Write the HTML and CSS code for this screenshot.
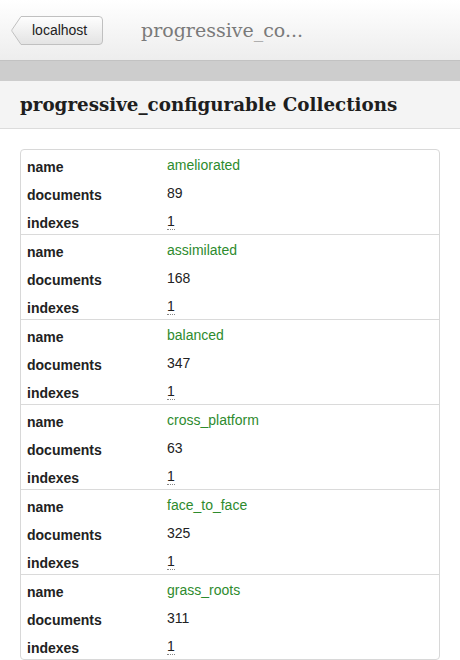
FILE: index.html
```html
<!DOCTYPE html>
<html>
<head>
<meta charset="utf-8">
<link rel="stylesheet" href="styles.css">
</head>
<body>
<header class="topbar">
  <a class="back">
    <svg class="back-shape" width="92" height="29" viewBox="0 0 92 29">
      <defs>
        <linearGradient id="bg" x1="0" y1="0" x2="0" y2="1">
          <stop offset="0" stop-color="#fefefe"/>
          <stop offset="1" stop-color="#e3e3e3"/>
        </linearGradient>
      </defs>
      <path d="M10,0.5 L88,0.5 Q91.5,0.5 91.5,4 L91.5,25 Q91.5,28.5 88,28.5 L10,28.5 L1,15.3 Q0.5,14.5 1,13.7 Z" fill="url(#bg)" stroke="#c0c0c0" stroke-width="1"/>
    </svg>
    <span class="back-label">localhost</span>
  </a>
  <span class="crumb">progressive_co...</span>
</header>
<div class="band"></div>
<h1 class="title">progressive_configurable Collections</h1>
<main class="content">
  <div class="card">
    <table class="grid">
      <tbody class="group">
        <tr><th>name</th><td class="name">ameliorated</td></tr>
        <tr><th>documents</th><td>89</td></tr>
        <tr><th>indexes</th><td><abbr>1</abbr></td></tr>
      </tbody>
      <tbody class="group">
        <tr><th>name</th><td class="name">assimilated</td></tr>
        <tr><th>documents</th><td>168</td></tr>
        <tr><th>indexes</th><td><abbr>1</abbr></td></tr>
      </tbody>
      <tbody class="group">
        <tr><th>name</th><td class="name">balanced</td></tr>
        <tr><th>documents</th><td>347</td></tr>
        <tr><th>indexes</th><td><abbr>1</abbr></td></tr>
      </tbody>
      <tbody class="group">
        <tr><th>name</th><td class="name">cross_platform</td></tr>
        <tr><th>documents</th><td>63</td></tr>
        <tr><th>indexes</th><td><abbr>1</abbr></td></tr>
      </tbody>
      <tbody class="group">
        <tr><th>name</th><td class="name">face_to_face</td></tr>
        <tr><th>documents</th><td>325</td></tr>
        <tr><th>indexes</th><td><abbr>1</abbr></td></tr>
      </tbody>
      <tbody class="group">
        <tr><th>name</th><td class="name">grass_roots</td></tr>
        <tr><th>documents</th><td>311</td></tr>
        <tr><th>indexes</th><td><abbr>1</abbr></td></tr>
      </tbody>
    </table>
  </div>
</main>
</body>
</html>
```

FILE: styles.css
```css
html, body {
  margin: 0;
  padding: 0;
  background: #fff;
  font-family: "Liberation Sans", Arial, sans-serif;
  color: #222;
}

.topbar {
  height: 60px;
  box-sizing: border-box;
  display: flex;
  align-items: center;
  padding-left: 11px;
  background: linear-gradient(#ffffff, #ededed);
}

.back {
  position: relative;
  z-index: 0;
  height: 29px;
  width: 92px;
  box-sizing: border-box;
  padding-left: 21px;
  font-size: 14px;
  line-height: 29px;
  color: #222;
  display: flex;
}

.back-shape {
  position: absolute;
  left: 0;
  top: 0;
  z-index: -1;
}

.crumb {
  margin-left: 38px;
  font-family: "DejaVu Serif", "Liberation Serif", serif;
  font-size: 19px;
  color: #7a7a7a;
}

.band {
  height: 21px;
  background: #cdcdcd;
  border-top: 1px solid #c2c2c2;
  box-sizing: border-box;
}

.title {
  margin: 0;
  height: 48px;
  box-sizing: border-box;
  padding-left: 20px;
  display: flex;
  align-items: center;
  background: #f4f4f4;
  border-bottom: 1px solid #dcdcdc;
  font-family: "DejaVu Serif", "Liberation Serif", serif;
  font-weight: bold;
  font-size: 18.3px;
  color: #1e1e1e;
}

.content {
  padding: 20px 20px 0;
}

.card {
  border: 1px solid #d8d8d8;
  border-radius: 4px;
  overflow: hidden;
}

.grid {
  width: 100%;
  border-collapse: collapse;
}

.group + .group {
  border-top: 1px solid #dadada;
}

.grid th, .grid td {
  padding: 0;
  font-size: 14px;
  vertical-align: top;
}

.grid th {
  width: 140px;
  padding-left: 6px;
  padding-top: 6px;
  line-height: 22px;
  text-align: left;
  font-weight: bold;
  color: #222;
}

.grid td {
  padding-top: 3px;
  line-height: 25px;
  color: #222;
}

.grid td.name {
  color: #2e8b2e;
}

abbr {
  text-decoration: none;
  border-bottom: 1px dotted #888;
}
```
